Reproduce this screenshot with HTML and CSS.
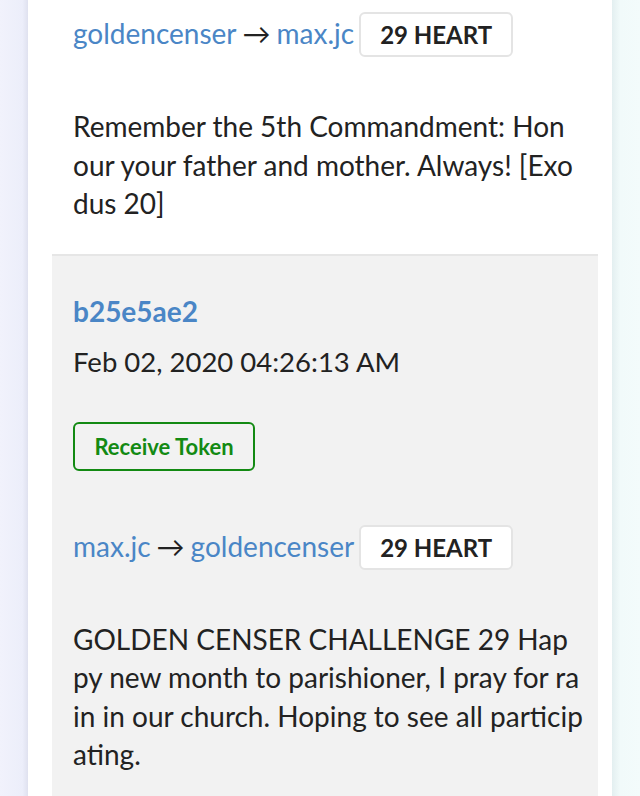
FILE: index.html
```html
<!DOCTYPE html>
<html lang="en">
<head>
  <meta charset="UTF-8">
  <meta name="viewport" content="width=device-width, initial-scale=1.0">
  <title>Transactions</title>
  <link rel="stylesheet" href="styles.css">
</head>
<body>
  <div class="page">
    <div class="side side-left"></div>
    <div class="card">
      <ul class="tx-list">
        <li class="tx tx-first">
          <div class="transfer">
            <a href="#" class="user">goldencenser</a>
            <span class="arrow">→</span>
            <a href="#" class="user">max.jc</a>
            <span class="amount">29 HEART</span>
          </div>
          <p class="memo">Remember the 5th Commandment: Hon<br>our your father and mother. Always! [Exo<br>dus 20]</p>
        </li>
        <li class="tx tx-active">
          <a href="#" class="hash">b25e5ae2</a>
          <div class="date">Feb 02, 2020 04:26:13 AM</div>
          <button class="receive">Receive Token</button>
          <div class="transfer">
            <a href="#" class="user">max.jc</a>
            <span class="arrow">→</span>
            <a href="#" class="user">goldencenser</a>
            <span class="amount">29 HEART</span>
          </div>
          <p class="memo">GOLDEN CENSER CHALLENGE 29 Hap<br>py new month to parishioner, I pray for ra<br>in in our church. Hoping to see all particip<br>ating.</p>
        </li>
      </ul>
    </div>
    <div class="side side-right"></div>
  </div>
</body>
</html>
```

FILE: styles.css
```css
body {
  margin: 0;
  font-family: Lato, "Open Sans", sans-serif;
  color: #222;
  background-color: #fff;
}
.page {
  display: flex;
  min-height: 796px;
}
.side {
  width: 28px;
  flex: none;
}
.side-left {
  background: linear-gradient(to right, #f1f2fc, #eceefa 80%, #dfe1ef);
}
.side-right {
  background: linear-gradient(to right, #e3eff0, #f1fafa 30%, #f3fbfb);
}
.card {
  flex: 1;
  background: #fff;
  padding: 0 14px 0 24px;
}
.tx-list {
  list-style: none;
  margin: 0;
  padding: 0;
}
.tx {
  padding: 12px 10px 31px 21px;
  font-size: 28px;
  line-height: 38.5px;
}
.tx-active {
  background: #f2f2f2;
  border-top: 2px solid #e6e6e6;
  padding-top: 36px;
}
a {
  color: #4a86c6;
  text-decoration: none;
}
.transfer {
  display: flex;
  align-items: baseline;
  gap: 6px;
}
.arrow {
  color: #222;
}
.amount {
  margin-left: -1px;
  width: 154px;
  height: 45px;
  box-sizing: border-box;
  display: inline-flex;
  align-items: center;
  justify-content: center;
  background: #fff;
  border: 2px solid #e4e4e4;
  border-radius: 6px;
  font-weight: bold;
  font-size: 24px;
  line-height: normal;
}
.memo {
  margin: 50px 0 0;
  white-space: nowrap;
}
.hash {
  display: block;
  font-weight: bold;
  margin-bottom: 13px;
}
.date {
  font-size: 27.5px;
  margin-bottom: 40px;
}
.receive {
  display: block;
  width: 182px;
  height: 49px;
  margin-bottom: 54px;
  background: transparent;
  border: 2px solid #138a13;
  border-radius: 6px;
  color: #138a13;
  font-family: inherit;
  font-weight: bold;
  font-size: 22px;
  cursor: pointer;
}
```
